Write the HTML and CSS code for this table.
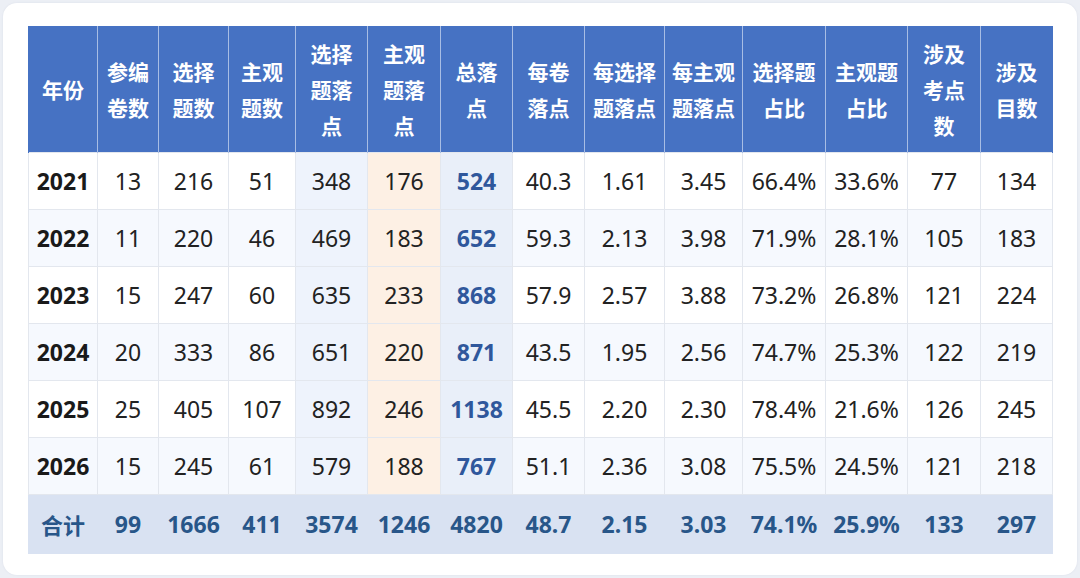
FILE: index.html
```html
<!DOCTYPE html>
<html lang="zh-CN">
<head>
<meta charset="utf-8">
<link rel="stylesheet" href="styles.css">
</head>
<body>
<div class="card">
<table class="stats">
<colgroup>
<col style="width:69px"><col style="width:61px"><col style="width:70px"><col style="width:67px"><col style="width:72px"><col style="width:73px"><col style="width:72px"><col style="width:72px"><col style="width:80px"><col style="width:78px"><col style="width:83px"><col style="width:82px"><col style="width:73px"><col style="width:72px">
</colgroup>
<thead>
<tr>
<th>年份</th><th>参编<br>卷数</th><th>选择<br>题数</th><th>主观<br>题数</th><th>选择<br>题落<br>点</th><th>主观<br>题落<br>点</th><th>总落<br>点</th><th>每卷<br>落点</th><th>每选择<br>题落点</th><th>每主观<br>题落点</th><th>选择题<br>占比</th><th>主观题<br>占比</th><th>涉及<br>考点<br>数</th><th>涉及<br>目数</th>
</tr>
</thead>
<tbody>
<tr><td class="yr">2021</td><td>13</td><td>216</td><td>51</td><td class="c-sel">348</td><td class="c-sub">176</td><td class="c-tot">524</td><td>40.3</td><td>1.61</td><td>3.45</td><td>66.4%</td><td>33.6%</td><td>77</td><td>134</td></tr>
<tr><td class="yr">2022</td><td>11</td><td>220</td><td>46</td><td class="c-sel">469</td><td class="c-sub">183</td><td class="c-tot">652</td><td>59.3</td><td>2.13</td><td>3.98</td><td>71.9%</td><td>28.1%</td><td>105</td><td>183</td></tr>
<tr><td class="yr">2023</td><td>15</td><td>247</td><td>60</td><td class="c-sel">635</td><td class="c-sub">233</td><td class="c-tot">868</td><td>57.9</td><td>2.57</td><td>3.88</td><td>73.2%</td><td>26.8%</td><td>121</td><td>224</td></tr>
<tr><td class="yr">2024</td><td>20</td><td>333</td><td>86</td><td class="c-sel">651</td><td class="c-sub">220</td><td class="c-tot">871</td><td>43.5</td><td>1.95</td><td>2.56</td><td>74.7%</td><td>25.3%</td><td>122</td><td>219</td></tr>
<tr><td class="yr">2025</td><td>25</td><td>405</td><td>107</td><td class="c-sel">892</td><td class="c-sub">246</td><td class="c-tot">1138</td><td>45.5</td><td>2.20</td><td>2.30</td><td>78.4%</td><td>21.6%</td><td>126</td><td>245</td></tr>
<tr><td class="yr">2026</td><td>15</td><td>245</td><td>61</td><td class="c-sel">579</td><td class="c-sub">188</td><td class="c-tot">767</td><td>51.1</td><td>2.36</td><td>3.08</td><td>75.5%</td><td>24.5%</td><td>121</td><td>218</td></tr>
</tbody>
<tfoot>
<tr><td class="lbl">合计</td><td>99</td><td>1666</td><td>411</td><td>3574</td><td>1246</td><td>4820</td><td>48.7</td><td>2.15</td><td>3.03</td><td>74.1%</td><td>25.9%</td><td>133</td><td>297</td></tr>
</tfoot>
</table>
</div>
</body>
</html>
```
FILE: styles.css
```css
html, body {
  margin: 0;
  padding: 0;
}
body {
  background: #eceff5;
  width: 1080px;
  height: 578px;
  overflow: hidden;
  font-family: "Noto Sans", "Noto Sans CJK SC", sans-serif;
}
.card {
  margin: 3px;
  width: 1074px;
  height: 572px;
  box-sizing: border-box;
  background: #ffffff;
  border-radius: 14px;
  padding: 23px 25px 22px;
  box-shadow: 0 0 2px rgba(120, 130, 160, 0.15);
}
.stats {
  width: 1024px;
  border-collapse: collapse;
  table-layout: fixed;
  text-align: center;
}
.stats th {
  background: #4672c3;
  color: #ffffff;
  font-family: "Noto Sans CJK SC", sans-serif;
  font-weight: 700;
  font-size: 21px;
  line-height: 36px;
  height: 126px;
  padding: 0;
  border-left: 1px solid #a8bde4;
  border-right: 1px solid #a8bde4;
  vertical-align: middle;
  white-space: nowrap;
}
.stats th:first-child { border-left: 1px solid #4672c3; }
.stats th:last-child { border-right: 1px solid #4672c3; }
.stats td {
  height: 56px;
  padding: 0;
  font-size: 23px;
  color: #222222;
  border: 1px solid #e3e7ee;
  vertical-align: middle;
  white-space: nowrap;
  background: #ffffff;
}
.stats tbody tr:nth-child(even) td {
  background: #f6f9fe;
}
.stats tbody td.yr {
  font-weight: 700;
  color: #1a1a1a;
}
.stats tbody td.c-sel,
.stats tbody tr:nth-child(even) td.c-sel {
  background: #eef3fc;
}
.stats tbody td.c-sub,
.stats tbody tr:nth-child(even) td.c-sub {
  background: #fdf0e4;
}
.stats tbody td.c-tot,
.stats tbody tr:nth-child(even) td.c-tot {
  background: #e9eff9;
  color: #2f579c;
  font-weight: 700;
}
.stats tfoot td {
  height: 58px;
  background: #d9e2f2;
  color: #285689;
  font-weight: 700;
  border: 1px solid #d9e2f2;
  border-top: 1px solid #e3e7ee;
}
.stats tfoot td.lbl {
  font-family: "Noto Sans CJK SC", sans-serif;
  font-size: 22px;
}
```
